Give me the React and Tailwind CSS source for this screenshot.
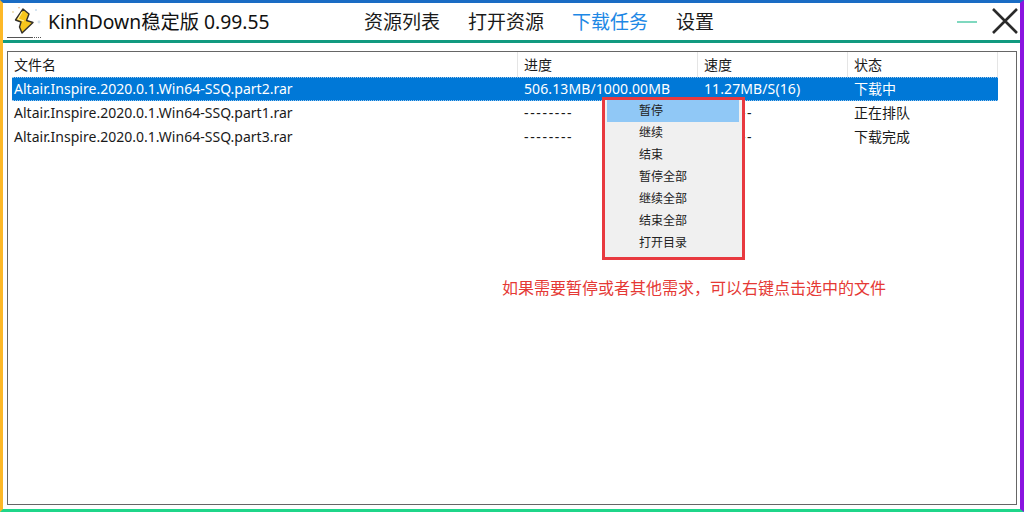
const font = { cjk: "font-['Noto_Sans','Noto_Sans_CJK_SC',sans-serif]" };

const columns = [
  { title: '文件名', width: 'w-[506px]', pad: 'pl-[2px]' },
  { title: '进度', width: 'w-[180px]', pad: 'pl-[6px]' },
  { title: '速度', width: 'w-[150px]', pad: 'pl-[6px]' },
  { title: '状态', width: 'w-[150px]', pad: 'pl-[6px]' },
];

const rows = [
  { name: 'Altair.Inspire.2020.0.1.Win64-SSQ.part2.rar', progress: '506.13MB/1000.00MB', speed: '11.27MB/S(16)', status: '下载中', active: true },
  { name: 'Altair.Inspire.2020.0.1.Win64-SSQ.part1.rar', progress: '--------', speed: '--------', status: '正在排队' },
  { name: 'Altair.Inspire.2020.0.1.Win64-SSQ.part3.rar', progress: '--------', speed: '--------', status: '下载完成' },
];

const navItems = ['资源列表', '打开资源', '下载任务', '设置'];
const menuItems = ['暂停', '继续', '结束', '暂停全部', '继续全部', '结束全部', '打开目录'];

const Logo = () => (
  <svg width="34" height="32" viewBox="7 7 34 32" className="shrink-0">
    <path d="M23 9 L15.5 20 L21 22 L19.5 27 L22 33 L33 22.5 L26.5 20.5 L29 14 Z" fill="#f7c61c" stroke="#33302a" strokeWidth="1.4" strokeLinejoin="round" />
    <path d="M22 12 L18 19 L24 21" fill="none" stroke="#fff0a0" strokeWidth="1.1" />
    <circle cx="13" cy="12" r="1" fill="#e8d9a8" />
    <circle cx="19" cy="7.5" r="1" fill="#e8c9a8" />
    <circle cx="36" cy="10" r="1" fill="#c9dcec" />
    <circle cx="39" cy="22" r="1.4" fill="#d5e3ee" />
    <path d="M7 37.5 H41" stroke="#555" strokeWidth="1" strokeDasharray="26 1 1 1 1 1 1 1" />
  </svg>
);

export default function App() {
  return (
    <div className={`w-[1024px] h-[512px] bg-white flex flex-col border-t-[3px] border-t-[#1a6cc4] border-l-[3px] border-l-[#fdb827] border-r-[4px] border-r-[#8a14e0] border-b-[3px] border-b-[#1fd68a] text-[#1a1a1a] ${font.cjk}`}>
      {/* Title bar */}
      <div className="h-[37px] flex items-center shrink-0">
        <div className="ml-[4px] mt-[3px]">
          <Logo />
        </div>
        <div className="ml-[7px] w-[222px] whitespace-nowrap text-[19.3px] leading-none text-[#111]">KinhDown稳定版 0.99.55</div>
        <div className="ml-[94px] mt-[2px] flex gap-[28px] text-[19px] leading-none">
          {navItems.map((item) => (
            <span key={item} className={item === '下载任务' ? 'text-[#1e88e5]' : 'text-[#1a1a1a]'}>
              {item}
            </span>
          ))}
        </div>
        <div className="ml-auto mr-[1px] flex items-center gap-[14px]">
          <div className="w-[20px] h-[2px] bg-[#7fd8bf]" />
          <svg width="28" height="28" viewBox="0 0 28 28" className="-mt-[1px]">
            <path d="M2 2 L26 26 M26 2 L2 26" stroke="#2a2a2a" strokeWidth="2.6" fill="none" />
          </svg>
        </div>
      </div>
      <div className="h-[3px] bg-[#129a80] shrink-0" />

      {/* Task table */}
      <div className="relative mt-[8px] ml-[4px] mr-[3px] mb-[4px] flex-1 border border-[#666] pl-[4px] text-[14px]">
        <div className="flex h-[25px]">
          {columns.map((col) => (
            <div key={col.title} className={`${col.width} ${col.pad} border-r border-[#e5e5e5] pt-[3px] leading-[20px]`}>
              {col.title}
            </div>
          ))}
        </div>
        {rows.map((row) => (
          <div
            key={row.name}
            className={`flex w-[986px] h-[24px] items-center leading-none ${row.active ? 'bg-[#0078d7] text-white border-y border-dotted border-[#9cc8ee]' : ''}`}
          >
            <div className="w-[506px] pl-[2px] tracking-[0.02px]">{row.name}</div>
            <div className="w-[180px] pl-[6px]">
              <span className={row.active ? 'tracking-[0.1px]' : 'tracking-[1.65px]'}>{row.progress}</span>
            </div>
            <div className="w-[150px] pl-[6px]">
              <span className={row.active ? 'tracking-[0.1px]' : 'tracking-[1.65px]'}>{row.speed}</span>
            </div>
            <div className="w-[150px] pl-[6px]">{row.status}</div>
          </div>
        ))}

        {/* Context menu */}
        <div className="absolute left-[594px] top-[45px] w-[143px] h-[163px] border-[3px] border-[#e8393f] bg-[#f0f0f0] pr-[3px] pl-[2px] text-[12px]">
          {menuItems.map((item, i) => (
            <div key={item} className={`h-[22px] flex items-center pl-[32px] text-[#222] ${i === 0 ? 'bg-[#90c8f6]' : ''}`}>
              {item}
            </div>
          ))}
        </div>

        <div className="absolute left-[494px] top-[224px] text-[16px] leading-[24px] text-[#e53935]">
          如果需要暂停或者其他需求，可以右键点击选中的文件
        </div>
      </div>
    </div>
  );
}
